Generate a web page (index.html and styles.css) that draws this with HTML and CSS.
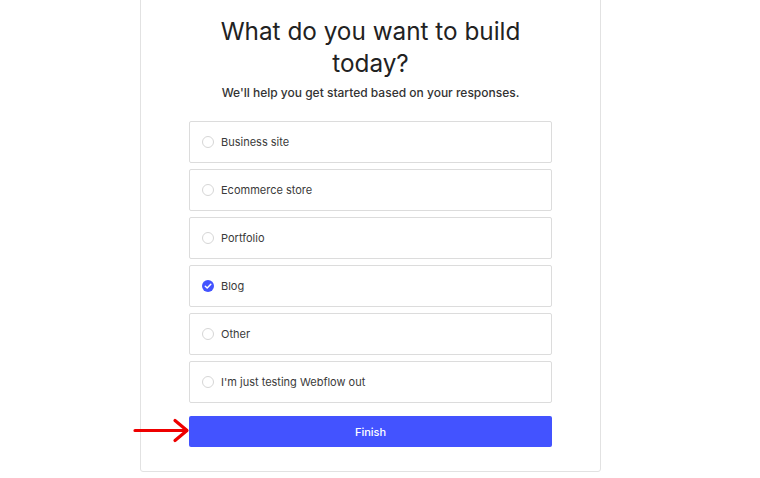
FILE: index.html
```html
<!DOCTYPE html>
<html>
<head>
<meta charset="utf-8">
<link rel="stylesheet" href="styles.css">
</head>
<body>
<div class="card">
  <h1 class="title">What do you want to build<br>today?</h1>
  <p class="subtitle">We'll help you get started based on your responses.</p>
  <div class="options">
    <div class="option"><span class="radio"></span><span class="label">Business site</span></div>
    <div class="option"><span class="radio"></span><span class="label">Ecommerce store</span></div>
    <div class="option"><span class="radio"></span><span class="label">Portfolio</span></div>
    <div class="option"><span class="radio checked"><svg viewBox="0 0 12 12" width="12" height="12"><path d="M3.3 6.2 L5.2 8 L8.8 4.3" fill="none" stroke="#fff" stroke-width="1.5" stroke-linecap="round" stroke-linejoin="round"/></svg></span><span class="label">Blog</span></div>
    <div class="option"><span class="radio"></span><span class="label">Other</span></div>
    <div class="option"><span class="radio"></span><span class="label">I'm just testing Webflow out</span></div>
  </div>
  <div class="button-wrap">
    <button class="finish">Finish</button>
    <svg class="arrow" viewBox="0 0 58 26" width="58" height="26"><path d="M2 12.5 H53 M42 2.5 L54 12.5 L42 22.5" fill="none" stroke="#ee0000" stroke-width="3.2" stroke-linecap="round" stroke-linejoin="round"/></svg>
  </div>
</div>
</body>
</html>
```
FILE: styles.css
```css
html, body {
  margin: 0;
  padding: 0;
  background: #ffffff;
}
body {
  font-family: Inter, "Noto Sans", sans-serif;
  color: #222;
}
.card {
  box-sizing: border-box;
  width: 461px;
  margin: -1px 0 0 140px;
  border: 1px solid #e2e2e2;
  border-radius: 0 0 3px 3px;
  padding: 15px 48px 24px 48px;
  display: flex;
  flex-direction: column;
  align-items: stretch;
}
.title {
  margin: 0;
  font-size: 24.3px;
  line-height: 32px;
  font-weight: 400;
  text-align: center;
  color: #222;
}
.subtitle {
  margin: 5px 0 0;
  font-size: 12px;
  line-height: 18px;
  font-weight: 500;
  text-align: center;
  color: #333;
}
.options {
  margin-top: 19px;
  display: flex;
  flex-direction: column;
  gap: 6px;
}
.option {
  box-sizing: border-box;
  height: 42px;
  border: 1px solid #dcdcdc;
  border-radius: 2px;
  display: flex;
  align-items: center;
  padding-left: 12px;
  gap: 7px;
}
.radio {
  box-sizing: border-box;
  width: 12px;
  height: 12px;
  border: 1px solid #d6d6d6;
  border-radius: 50%;
  display: flex;
  align-items: center;
  justify-content: center;
  flex: none;
}
.radio.checked {
  border: none;
  background: #4353ff;
}
.radio svg {
  display: block;
}
.label {
  font-size: 11px;
  color: #3a3a3a;
  line-height: 14px;
}
.button-wrap {
  position: relative;
  margin-top: 13px;
}
.finish {
  display: block;
  box-sizing: border-box;
  width: 100%;
  height: 31px;
  border: none;
  border-radius: 2px;
  background: #4353ff;
  color: #fff;
  font-family: Inter, "Noto Sans", sans-serif;
  font-size: 11px;
  font-weight: 500;
}
.arrow {
  position: absolute;
  left: -56px;
  top: 2px;
}
```
